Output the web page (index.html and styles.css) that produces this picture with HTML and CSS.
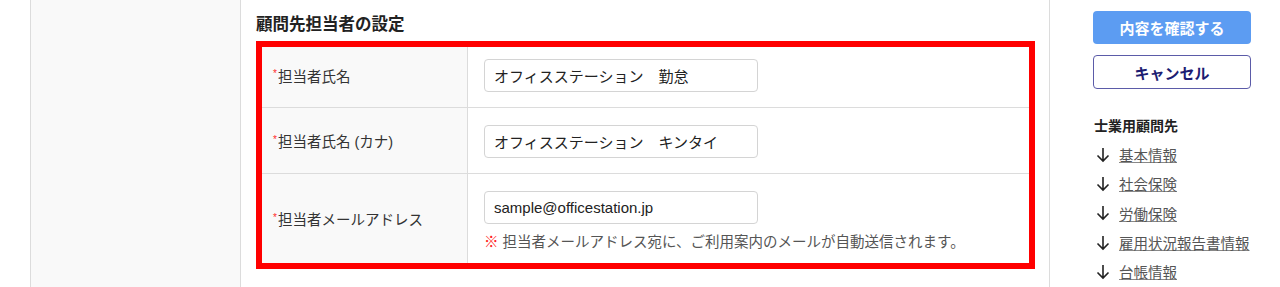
FILE: index.html
```
<!DOCTYPE html>
<html lang="ja">
<head>
    <meta charset="UTF-8">
    <title>顧問先担当者の設定</title>
    <link rel="stylesheet" href="styles.css">
</head>
<body>
  <div class="page">
    <div class="gutter"></div>
    <div class="side-left"></div>

    <div class="main">
      <h2 class="section-title">顧問先担当者の設定</h2>
      <div class="highlight">
        <div class="form-table">
          <div class="row row-1">
            <div class="label"><span class="req">*</span>担当者氏名</div>
            <div class="field">
              <input class="text-input" type="text" value="オフィスステーション　勤怠">
            </div>
          </div>
          <div class="row row-2">
            <div class="label"><span class="req">*</span>担当者氏名 (カナ)</div>
            <div class="field">
              <input class="text-input" type="text" value="オフィスステーション　キンタイ">
            </div>
          </div>
          <div class="row row-3">
            <div class="label"><span class="req">*</span>担当者メールアドレス</div>
            <div class="field">
              <input class="text-input" type="text" value="sample@officestation.jp">
              <div class="note"><span class="mark">※</span> 担当者メールアドレス宛に、ご利用案内のメールが自動送信されます。</div>
            </div>
          </div>
        </div>
      </div>
    </div>

    <div class="side-right">
      <button type="button" class="btn btn-primary">内容を確認する</button>
      <button type="button" class="btn btn-cancel">キャンセル</button>
      <div class="nav-title">士業用顧問先</div>
      <ul class="nav-list">
        <li><svg class="arrow" width="14" height="16" viewBox="0 0 14 16"><path d="M7 1 V14 M1.5 8.5 L7 14 L12.5 8.5" fill="none" stroke="#222" stroke-width="1.6"/></svg><a href="#">基本情報</a></li>
        <li><svg class="arrow" width="14" height="16" viewBox="0 0 14 16"><path d="M7 1 V14 M1.5 8.5 L7 14 L12.5 8.5" fill="none" stroke="#222" stroke-width="1.6"/></svg><a href="#">社会保険</a></li>
        <li><svg class="arrow" width="14" height="16" viewBox="0 0 14 16"><path d="M7 1 V14 M1.5 8.5 L7 14 L12.5 8.5" fill="none" stroke="#222" stroke-width="1.6"/></svg><a href="#">労働保険</a></li>
        <li><svg class="arrow" width="14" height="16" viewBox="0 0 14 16"><path d="M7 1 V14 M1.5 8.5 L7 14 L12.5 8.5" fill="none" stroke="#222" stroke-width="1.6"/></svg><a href="#">雇用状況報告書情報</a></li>
        <li><svg class="arrow" width="14" height="16" viewBox="0 0 14 16"><path d="M7 1 V14 M1.5 8.5 L7 14 L12.5 8.5" fill="none" stroke="#222" stroke-width="1.6"/></svg><a href="#">台帳情報</a></li>
      </ul>
    </div>
  </div>
</body>
</html>
```

FILE: styles.css
```
html, body {
  margin: 0;
  padding: 0;
  background: #fff;
  color: #333;
  font-family: "Liberation Sans", "Noto Sans CJK JP", sans-serif;
}

.page {
  display: flex;
  height: 287px;
  overflow: hidden;
}

.gutter {
  width: 30px;
  flex: none;
}

.side-left {
  width: 209px;
  flex: none;
  background: #f9f9f9;
  border-left: 1px solid #dcdcdc;
  border-right: 1px solid #dcdcdc;
}

.main {
  width: 793px;
  flex: none;
  padding: 13px 0 0 15px;
  border-right: 1px solid #dcdcdc;
}

.section-title {
  margin: 0 0 6px 0;
  font-size: 16.5px;
  line-height: 22px;
  font-weight: bold;
  color: #222;
}

.highlight {
  width: 767px;
  border: 6px solid #ff0000;
}

.form-table {
  display: flex;
  flex-direction: column;
}

.row {
  display: grid;
  grid-template-columns: 206px 1fr;
  border-bottom: 1px solid #dcdcdc;
}
.row:last-child {
  border-bottom: none;
}
.row-1 { height: 60px; }
.row-2 { height: 65px; }
.row-3 { height: 89px; }

.label {
  display: flex;
  align-items: center;
  padding-left: 11px;
  background: #f9f9f9;
  border-right: 1px solid #dcdcdc;
  font-size: 14.5px;
  color: #333;
}
.row-1 .label {
  padding-bottom: 4px;
}

.req {
  color: #ff2a2a;
  font-size: 10px;
  margin-top: -3px;
  margin-right: 1px;
}

.field {
  display: flex;
  flex-direction: column;
  padding-left: 16px;
  padding-top: 17px;
}
.row-1 .field {
  padding-top: 12px;
}

.text-input {
  width: 274px;
  height: 33px;
  box-sizing: border-box;
  border: 1px solid #d4d4d4;
  border-radius: 4px;
  padding: 0 9px;
  font-family: "Liberation Sans", "Noto Sans CJK JP", sans-serif;
  font-size: 15px;
  color: #222;
  background: #fff;
}

.note {
  margin-top: 8px;
  font-size: 14.5px;
  line-height: 20px;
  color: #555;
}
.note .mark {
  color: #ff1a1a;
  font-weight: bold;
}

.side-right {
  padding: 11px 0 0 43px;
  width: 158px;
  flex: none;
}

.btn {
  display: block;
  width: 158px;
  border-radius: 4px;
  font-family: "Liberation Sans", "Noto Sans CJK JP", sans-serif;
  font-size: 15px;
  font-weight: bold;
  cursor: pointer;
}

.btn-primary {
  height: 33px;
  border: none;
  background: #5c9cf2;
  color: #fff;
}

.btn-cancel {
  height: 34px;
  margin-top: 11px;
  border: 1px solid #5b5ba8;
  background: #fff;
  color: #1c1c72;
}

.nav-title {
  margin-top: 27px;
  font-size: 14px;
  font-weight: bold;
  line-height: 20px;
  color: #222;
  padding-left: 1px;
}

.nav-list {
  list-style: none;
  margin: 4px 0 0 0;
  padding: 0 0 0 3px;
}
.nav-list li {
  display: flex;
  align-items: center;
  height: 29.3px;
}
.arrow {
  margin-right: 9px;
  flex: none;
}
.nav-list a {
  font-size: 14.5px;
  color: #555;
  text-decoration: underline;
  text-decoration-color: #888;
}
```
